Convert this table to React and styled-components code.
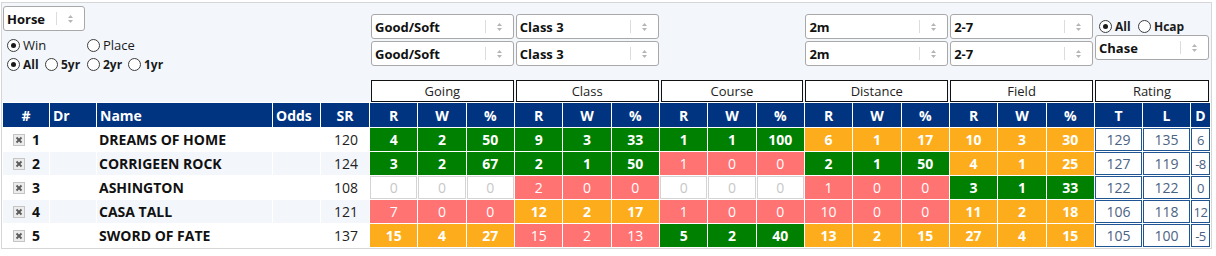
import React from "react";
import styled, { createGlobalStyle } from "styled-components";

const GlobalStyle = createGlobalStyle`
  body {
    margin: 0;
    background: #fff;
    font-family: "Open Sans", "Noto Sans", Arial, sans-serif;
  }
`;

const groups = ["Going", "Class", "Course", "Distance", "Field"];

const filterValues = {
  Going: "Good/Soft",
  Class: "Class 3",
  Distance: "2m",
  Field: "2-7",
};

const rows = [
  {
    n: 1,
    name: "DREAMS OF HOME",
    sr: 120,
    stats: [["g", 4, 2, 50], ["g", 9, 3, 33], ["g", 1, 1, 100], ["o", 6, 1, 17], ["o", 10, 3, 30]],
    t: 129,
    l: 135,
    d: 6,
  },
  {
    n: 2,
    name: "CORRIGEEN ROCK",
    sr: 124,
    stats: [["g", 3, 2, 67], ["g", 2, 1, 50], ["r", 1, 0, 0], ["g", 2, 1, 50], ["o", 4, 1, 25]],
    t: 127,
    l: 119,
    d: -8,
  },
  {
    n: 3,
    name: "ASHINGTON",
    sr: 108,
    stats: [["e", 0, 0, 0], ["r", 2, 0, 0], ["e", 0, 0, 0], ["r", 1, 0, 0], ["g", 3, 1, 33]],
    t: 122,
    l: 122,
    d: 0,
  },
  {
    n: 4,
    name: "CASA TALL",
    sr: 121,
    stats: [["r", 7, 0, 0], ["o", 12, 2, 17], ["r", 1, 0, 0], ["r", 10, 0, 0], ["o", 11, 2, 18]],
    t: 106,
    l: 118,
    d: 12,
  },
  {
    n: 5,
    name: "SWORD OF FATE",
    sr: 137,
    stats: [["o", 15, 4, 27], ["r", 15, 2, 13], ["g", 5, 2, 40], ["o", 13, 2, 15], ["o", 27, 4, 15]],
    t: 105,
    l: 100,
    d: -5,
  },
];

const statColors = {
  g: { bg: "#008000", fg: "#fff", border: "#008000", weight: 700 },
  o: { bg: "#fdad1c", fg: "#fff", border: "#fdad1c", weight: 700 },
  r: { bg: "#ff7373", fg: "#fff", border: "#ff7373", weight: 400 },
  e: { bg: "#fff", fg: "#c8c8c8", border: "#d4d4d4", weight: 400 },
};

const Arrows = () => (
  <svg width="7" height="10" viewBox="0 0 7 10">
    <path d="M3.5 1 L6 4 L1 4 Z" fill="#b5b5b5" />
    <path d="M3.5 9 L6 6 L1 6 Z" fill="#b5b5b5" />
  </svg>
);

const CheckIcon = () => (
  <svg width="12" height="12" viewBox="0 0 12 12">
    <rect x="0.5" y="0.5" width="11" height="11" fill="#ececec" stroke="#c4c4c4" />
    <path d="M3.5 3.5 L8.5 8.5 M8.5 3.5 L3.5 8.5" stroke="#5a5a5a" strokeWidth="1.8" />
  </svg>
);

const Dropdown = ({ label, width }) => (
  <SelectBox $w={width}>
    <SelectText>{label}</SelectText>
    <SelectSep />
    <SelectArrows>
      <Arrows />
    </SelectArrows>
  </SelectBox>
);

const Radio = ({ label, checked, bold, width }) => (
  <RadioItem $bold={bold} $w={width}>
    <RadioCircle $checked={checked} />
    {label}
  </RadioItem>
);

const App = () => {
  return (
    <>
      <GlobalStyle />
      <Panel>
        <Filters>
          <LeftFilters>
            <Dropdown label="Horse" width="82px" />
            <RadioRow $top={6}>
              <Radio label="Win" checked width="80px" />
              <Radio label="Place" />
            </RadioRow>
            <RadioRow $top={3}>
              <Radio label="All" checked bold width="38px" />
              <Radio label="5yr" bold width="42px" />
              <Radio label="2yr" bold width="41px" />
              <Radio label="1yr" bold />
            </RadioRow>
          </LeftFilters>
          {groups.map((g) => (
            <GroupColumn key={g}>
              {filterValues[g] ? (
                <>
                  <Dropdown label={filterValues[g]} />
                  <Dropdown label={filterValues[g]} />
                </>
              ) : null}
              <GroupTitle>{g}</GroupTitle>
            </GroupColumn>
          ))}
          <GroupColumn>
            <RadioRow $top={6} $left={4} $h={13}>
              <Radio label="All" checked bold width="39px" />
              <Radio label="Hcap" bold />
            </RadioRow>
            <Dropdown label="Chase" width="114px" />
            <GroupTitle>Rating</GroupTitle>
          </GroupColumn>
        </Filters>
        <Table>
          <colgroup>
            <col style={{ width: 46 }} />
            <col style={{ width: 46 }} />
            <col style={{ width: 175 }} />
            <col style={{ width: 47 }} />
            <col style={{ width: 48 }} />
            {Array.from({ length: 15 }).map((_, i) => (
              <col key={i} />
            ))}
            <col style={{ width: 47 }} />
            <col style={{ width: 47 }} />
            <col style={{ width: 19 }} />
          </colgroup>
          <thead>
            <tr>
              <HeadCell>#</HeadCell>
              <HeadCell $align="left">Dr</HeadCell>
              <HeadCell $align="left">Name</HeadCell>
              <HeadCell $align="left">Odds</HeadCell>
              <HeadCell>SR</HeadCell>
              {groups.map((g) =>
                ["R", "W", "%"].map((h) => <HeadCell key={g + h}>{h}</HeadCell>)
              )}
              <HeadCell>T</HeadCell>
              <HeadCell>L</HeadCell>
              <HeadCell>D</HeadCell>
            </tr>
          </thead>
          <tbody>
            {rows.map((r, i) => (
              <tr key={r.n}>
                <NumCell $alt={i % 2 === 1}>
                  <NumWrap>
                    <CheckIcon />
                    {r.n}
                  </NumWrap>
                </NumCell>
                <Cell $alt={i % 2 === 1} />
                <NameCell $alt={i % 2 === 1}>{r.name}</NameCell>
                <Cell $alt={i % 2 === 1} />
                <SrCell $alt={i % 2 === 1}>{r.sr}</SrCell>
                {r.stats.map(([kind, ...vals], gi) =>
                  vals.map((v, vi) => (
                    <StatCell key={gi + "-" + vi} $kind={kind}>
                      {v}
                    </StatCell>
                  ))
                )}
                <RatingCell>{r.t}</RatingCell>
                <RatingCell>{r.l}</RatingCell>
                <RatingCell $tight>{r.d}</RatingCell>
              </tr>
            ))}
          </tbody>
        </Table>
      </Panel>
    </>
  );
};

export default App;

const Panel = styled.div`
  margin: 2px 0 0 1px;
  width: 1209px;
  border: 1px solid #d6d6d6;
  background: #f3f7fc;
`;

const Filters = styled.div`
  display: grid;
  grid-template-columns: 367px repeat(5, 143.8px) 115px;
  column-gap: 1px;
  height: 99px;
`;

const LeftFilters = styled.div`
  display: flex;
  flex-direction: column;
  padding: 3px 0 0 1px;
`;

const GroupColumn = styled.div`
  display: flex;
  flex-direction: column;
  gap: 2px;
  padding: 11px 0 0 1px;
`;

const GroupTitle = styled.div`
  margin-top: auto;
  height: 22px;
  box-sizing: border-box;
  border: 1px solid #111;
  background: #fff;
  color: #222;
  font-size: 13px;
  line-height: 20px;
  text-align: center;
`;

const SelectBox = styled.div`
  display: flex;
  align-items: center;
  width: ${(p) => p.$w || "143px"};
  height: 25px;
  box-sizing: border-box;
  border: 1px solid #a8a8a8;
  border-radius: 3px;
  background: #fff;
  padding-left: 3px;
  font-size: 13px;
  font-weight: 700;
  color: #111;
`;

const SelectText = styled.span`
  flex: 1;
  white-space: nowrap;
`;

const SelectSep = styled.span`
  width: 1px;
  height: 13px;
  background: #dcdcdc;
`;

const SelectArrows = styled.span`
  width: 27px;
  display: flex;
  justify-content: center;
  align-items: center;
`;

const RadioRow = styled.div`
  display: flex;
  align-items: center;
  height: ${(p) => p.$h || 16}px;
  margin-top: ${(p) => p.$top}px;
  padding-left: ${(p) => p.$left || 4}px;
`;

const RadioItem = styled.label`
  display: flex;
  align-items: center;
  gap: 3px;
  width: ${(p) => p.$w || "auto"};
  font-size: ${(p) => (p.$bold ? "12px" : "13px")};
  font-weight: ${(p) => (p.$bold ? 700 : 400)};
  color: #1a1a1a;
  white-space: nowrap;
`;

const RadioCircle = styled.span`
  width: 13px;
  height: 13px;
  box-sizing: border-box;
  border: 1px solid #3c3c3c;
  border-radius: 50%;
  background: #fff;
  display: flex;
  align-items: center;
  justify-content: center;
  &::after {
    content: "";
    width: 5px;
    height: 5px;
    border-radius: 50%;
    background: ${(p) => (p.$checked ? "#1a1a1a" : "transparent")};
  }
`;

const Table = styled.table`
  width: 1209px;
  table-layout: fixed;
  border-collapse: separate;
  border-spacing: 1px;
  background: #fff;
  font-size: 14px;
`;

const HeadCell = styled.th`
  height: 24px;
  padding: 0 0 0 ${(p) => (p.$align === "left" ? "3px" : "0")};
  background: #003380;
  color: #fff;
  font-size: 14px;
  font-weight: 700;
  text-align: ${(p) => p.$align || "center"};
  white-space: nowrap;
`;

const Cell = styled.td`
  height: 23px;
  padding: 0;
  background: ${(p) => (p.$alt ? "#f3f7fc" : "#fff")};
  color: #111;
`;

const NumCell = styled(Cell)`
  padding-left: 10px;
  font-weight: 700;
`;

const NumWrap = styled.div`
  display: flex;
  align-items: center;
  gap: 7px;
  svg {
    margin-top: 1px;
  }
`;

const NameCell = styled(Cell)`
  padding-left: 2px;
  font-weight: 700;
  white-space: nowrap;
`;

const SrCell = styled(Cell)`
  padding-right: 11px;
  text-align: right;
  color: #222;
`;

const StatCell = styled.td`
  height: 23px;
  padding: 0;
  box-sizing: border-box;
  text-align: center;
  background: ${(p) => statColors[p.$kind].bg};
  color: ${(p) => statColors[p.$kind].fg};
  font-weight: ${(p) => statColors[p.$kind].weight};
  border: 1px solid ${(p) => statColors[p.$kind].border};
`;

const RatingCell = styled.td`
  height: 23px;
  padding: 0;
  box-sizing: border-box;
  text-align: center;
  background: #fff;
  border: 1px solid #1f5592;
  color: #4a6283;
  font-size: ${(p) => (p.$tight ? "13px" : "14px")};
  letter-spacing: ${(p) => (p.$tight ? "-0.5px" : "0")};
`;
